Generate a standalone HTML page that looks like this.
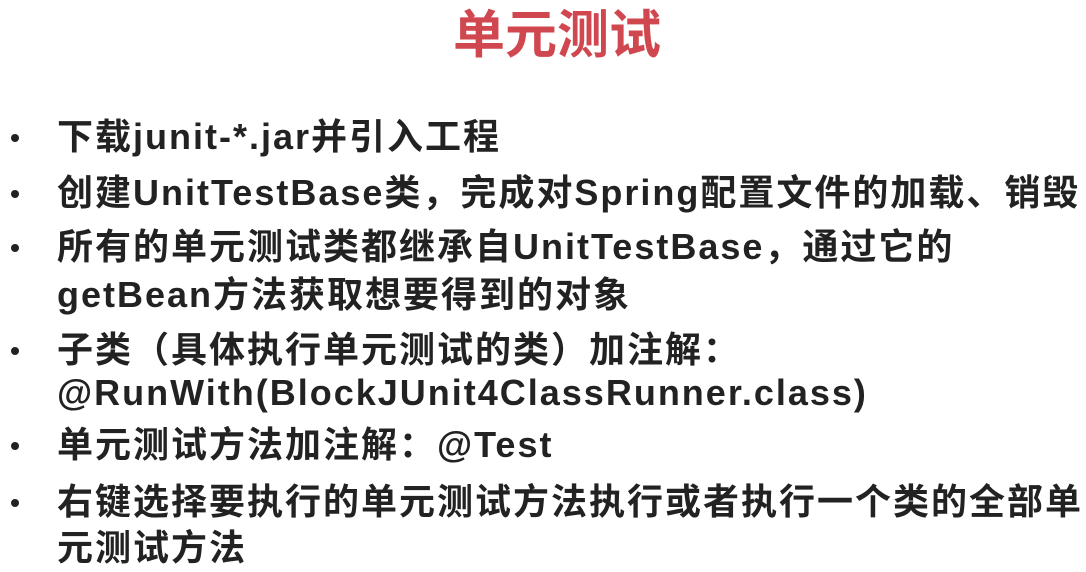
<!DOCTYPE html>
<html><head><meta charset="utf-8"><style>
body{margin:0;width:1086px;height:572px;background:#fff;overflow:hidden;position:relative;font-family:"Liberation Sans","Noto Sans CJK SC",sans-serif;}
.t{position:absolute;left:453px;top:6px;font-size:52px;font-weight:bold;color:#d0474f;line-height:60px;white-space:nowrap;}
.l{position:absolute;left:57px;font-size:36px;letter-spacing:2px;font-weight:bold;color:#222;line-height:40px;white-space:nowrap;}
.b{position:absolute;left:11px;width:8px;height:8px;border-radius:50%;background:#222;}
</style></head><body>
<div class="t">单元测试</div>
<div class="b" style="top:134px"></div><div class="l" style="top:117px">下载junit-*.jar并引入工程</div>
<div class="b" style="top:190px"></div><div class="l" style="top:173px">创建UnitTestBase类，完成对Spring配置文件的加载、销毁</div>
<div class="b" style="top:244px"></div><div class="l" style="top:227px">所有的单元测试类都继承自UnitTestBase，通过它的</div>
<div class="l" style="top:275px">getBean方法获取想要得到的对象</div>
<div class="b" style="top:347px"></div><div class="l" style="top:330px">子类（具体执行单元测试的类）加注解：</div>
<div class="l" style="top:373px">@RunWith(BlockJUnit4ClassRunner.class)</div>
<div class="b" style="top:442px"></div><div class="l" style="top:425px">单元测试方法加注解：@Test</div>
<div class="b" style="top:499px"></div><div class="l" style="top:482px">右键选择要执行的单元测试方法执行或者执行一个类的全部单</div>
<div class="l" style="top:528px">元测试方法</div>
</body></html>
